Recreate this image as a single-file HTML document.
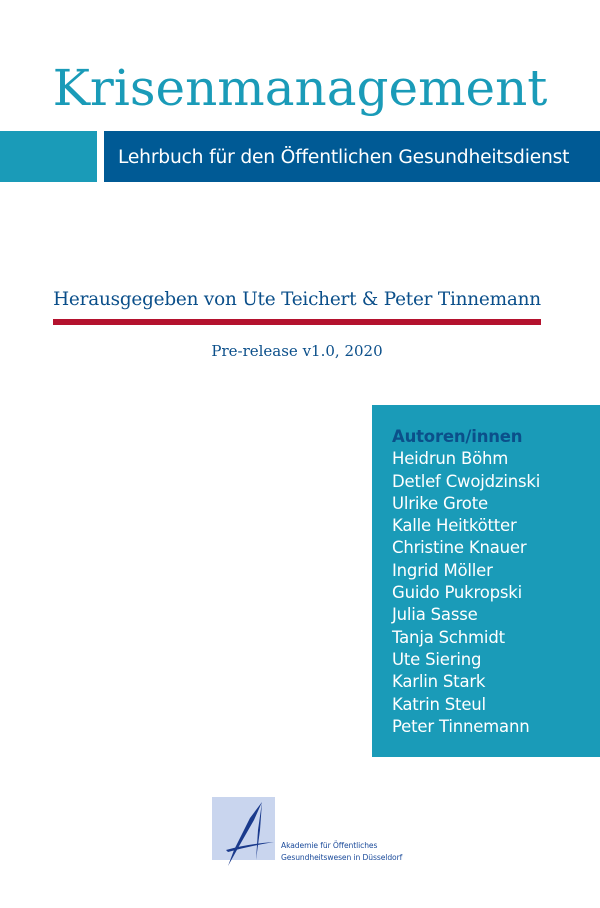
<!DOCTYPE html>
<html><head><meta charset="utf-8"><style>
body{margin:0;width:600px;height:908px;background:#fff;position:relative;overflow:hidden;font-family:"DejaVu Sans","Liberation Sans",sans-serif}
.a{position:absolute}
</style></head><body>
<div class="a" style="left:0;top:56px;width:600px;text-align:center;font-family:'DejaVu Serif','Liberation Serif',serif;font-size:50px;color:#1a9bb8;line-height:64px">Krisenmanagement</div>
<div class="a" style="left:0;top:131px;width:97px;height:51px;background:#1a9bb8"></div>
<div class="a" style="left:104px;top:131px;width:496px;height:51px;background:#005a95"></div>
<div class="a" style="left:118px;top:145px;font-size:18.7px;color:#fff;line-height:26px;letter-spacing:-0.2px">Lehrbuch für den Öffentlichen Gesundheitsdienst</div>
<div class="a" style="left:40px;top:287px;width:514px;text-align:center;font-family:'DejaVu Serif','Liberation Serif',serif;font-size:18.4px;color:#0b4f8a;line-height:26px;letter-spacing:-0.2px">Herausgegeben von Ute Teichert &amp; Peter Tinnemann</div>
<div class="a" style="left:53px;top:319px;width:488px;height:6px;background:#b4122e"></div>
<div class="a" style="left:53px;top:340px;width:488px;text-align:center;font-family:'DejaVu Serif','Liberation Serif',serif;font-size:15px;color:#0b4f8a;line-height:22px">Pre-release v1.0, 2020</div>
<div class="a" style="left:372px;top:405px;width:228px;height:352px;background:#1a9bb8"></div>
<div class="a" style="left:392px;top:426px;font-size:16.5px;line-height:22.3px;color:#fff;letter-spacing:-0.2px">
<div style="color:#0b4f8a;font-weight:bold">Autoren/innen</div>
<div>Heidrun Böhm</div><div>Detlef Cwojdzinski</div><div>Ulrike Grote</div><div>Kalle Heitkötter</div><div>Christine Knauer</div><div>Ingrid Möller</div><div>Guido Pukropski</div><div>Julia Sasse</div><div>Tanja Schmidt</div><div>Ute Siering</div><div>Karlin Stark</div><div>Katrin Steul</div><div>Peter Tinnemann</div>
</div>
<div class="a" style="left:212px;top:797px;width:63px;height:63px;background:#c9d5ee"></div>
<svg class="a" style="left:220px;top:800px" width="60" height="70" viewBox="0 0 60 70">
<path d="M42 2 L30 18 L14 50 L8 66 L18 48 L34 20 Z" fill="#1a3a8c"/>
<path d="M42 2 L38 30 L36 60 L40 30 Z" fill="#1a3a8c"/>
<path d="M6 50 Q26 44 54 42 Q30 46 8 52 Z" fill="#1a3a8c"/>
</svg>
<div class="a" style="left:281px;top:840px;font-size:7.6px;line-height:11.5px;color:#1a4a9a;letter-spacing:-0.1px">Akademie für Öffentliches<br>Gesundheitswesen in Düsseldorf</div>
</body></html>
